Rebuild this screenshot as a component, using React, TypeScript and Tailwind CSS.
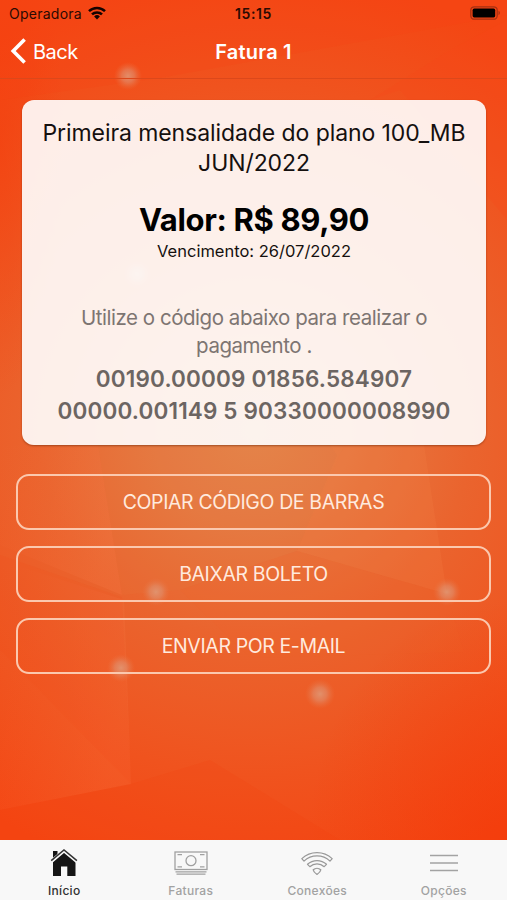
import { ReactNode } from "react";
import clsx from "clsx";

const sparks = [
  { x: 128, y: 76, r: 14 },
  { x: 137, y: 274, r: 14 },
  { x: 156, y: 592, r: 14 },
  { x: 447, y: 592, r: 14 },
  { x: 121, y: 668, r: 14 },
  { x: 320, y: 694, r: 15 },
];

function Backdrop() {
  return (
    <svg
      className="absolute inset-0 size-full"
      viewBox="0 0 507 900"
      preserveAspectRatio="none"
      aria-hidden="true"
    >
      <defs>
        <radialGradient
          id="glow"
          gradientUnits="userSpaceOnUse"
          cx="0"
          cy="0"
          r="1"
          gradientTransform="translate(255 430) scale(480 460)"
        >
          <stop offset="0" stopColor="#e5834a" />
          <stop offset="0.2" stopColor="#e67841" />
          <stop offset="0.45" stopColor="#ea642e" />
          <stop offset="0.75" stopColor="#f0531e" />
          <stop offset="1" stopColor="#f44613" />
        </radialGradient>
        <radialGradient id="spark">
          <stop offset="0" stopColor="#df9d7c" stopOpacity="0.8" />
          <stop offset="0.45" stopColor="#df9474" stopOpacity="0.55" />
          <stop offset="1" stopColor="#e87848" stopOpacity="0" />
        </radialGradient>
        <linearGradient id="facet" x1="0" y1="0" x2="1" y2="0.4">
          <stop offset="0" stopColor="#ff7040" stopOpacity="0" />
          <stop offset="1" stopColor="#ff8a58" stopOpacity="0.14" />
        </linearGradient>
        <radialGradient id="edge" cx="0" cy="0.35" r="0.64">
          <stop offset="0" stopColor="#f43f0e" stopOpacity="0.6" />
          <stop offset="1" stopColor="#f43f0e" stopOpacity="0" />
        </radialGradient>
        <radialGradient id="corner" cx="1" cy="1" r="1">
          <stop offset="0" stopColor="#f43808" stopOpacity="0.6" />
          <stop offset="1" stopColor="#f43808" stopOpacity="0" />
        </radialGradient>
      </defs>
      <rect width="507" height="900" fill="url(#glow)" />
      <rect width="100" height="400" fill="url(#edge)" />
      <path d="M0 0H507V15L160 78 0 100Z" fill="#f84315" opacity="0.2" />
      <path d="M507 20V220L400 90 370 100 450 50Z" fill="#f94717" opacity="0.2" />
      <path d="M98 445 122 595 0 545V445Z" fill="url(#facet)" />
      <path d="M124 600 131 784 0 810V560Z" fill="url(#facet)" />
      <path d="M0 555 122 597 131 784 0 650Z" fill="#f24414" opacity="0.1" />
      <path d="M337 460 297 551 180 590 122 595 98 445H345Z" fill="#e59452" opacity="0.06" />
      <path d="M337 455 297 551 447 594 424 445H330Z" fill="#f58048" opacity="0.2" />
      <path d="M297 551 447 594 464 652 250 658 180 590Z" fill="#f1662a" opacity="0.14" />
      <rect x="307" y="600" width="200" height="240" fill="url(#corner)" />
      <path d="M131 784 210 760 340 840H0V810Z" fill="#f63c0a" opacity="0.12" />
      {sparks.map((s) => (
        <circle key={`${s.x}-${s.y}`} cx={s.x} cy={s.y} r={s.r} fill="url(#spark)" />
      ))}
    </svg>
  );
}

function StatusBar() {
  return (
    <div className="grid h-[27px] grid-cols-3 items-center pl-[9px] pr-[6px] text-[#2b0a02]">
      <div className="flex items-center gap-[6px]">
        <span className="text-[14px] tracking-[0.25px]">Operadora</span>
        <svg className="-mt-[2px]" width="18" height="14" viewBox="0 0 18 14" fill="none" stroke="#140300" strokeWidth="2.5">
          <path d="M1 5.2a11.4 11.4 0 0 1 16 0" />
          <path d="M4 8.4a7.2 7.2 0 0 1 10 0" />
          <path d="M9 13.6 6.1 10.5a4.2 4.2 0 0 1 5.8 0z" fill="#140300" stroke="none" />
        </svg>
      </div>
      <span className="-ml-[3px] text-center text-[14px] font-semibold tracking-[0.6px]">15:15</span>
      <svg className="-mt-[1px] justify-self-end" width="31" height="14" viewBox="0 0 31 14">
        <rect x="0.8" y="0.8" width="26.4" height="12.4" rx="3.5" fill="none" stroke="#a53012" strokeWidth="1.3" />
        <rect x="2.6" y="2.6" width="22.6" height="8.8" rx="1.6" fill="#000" />
        <path d="M28.5 4.8a2.4 2.4 0 0 1 0 4.4z" fill="#a53012" />
      </svg>
    </div>
  );
}

function NavBar() {
  return (
    <header className="grid h-[52px] grid-cols-3 items-center border-b border-[#dc481b] px-[10px] pb-[2px] text-white">
      <button className="flex items-center gap-[7px] text-[20px] tracking-[-0.5px]">
        <svg className="-mt-[2px]" width="16" height="26" viewBox="0 0 16 26" fill="none" stroke="currentColor" strokeWidth="3.6">
          <path d="M14.6 1.5 3.2 13l11.4 11.5" />
        </svg>
        Back
      </button>
      <h1 className="text-center text-[20px] font-semibold tracking-[0.2px]">Fatura 1</h1>
    </header>
  );
}

function InvoiceCard() {
  return (
    <section className="ml-[22px] mr-[21px] mt-[21px] flex h-[345px] flex-col items-center rounded-[12px] bg-white/90 pt-[19px] text-center text-black shadow-[0_1px_2px_rgba(110,40,10,0.55)]">
      <h2 className="whitespace-nowrap text-[23px] leading-[29.5px] tracking-[-0.08px] text-[#15100f]">
        Primeira mensalidade do plano 100_MB
        <br />
        JUN/2022
      </h2>
      <p className="mt-[23px] whitespace-nowrap text-[31px] font-bold leading-[38px] tracking-[-0.35px]">
        Valor: R$ 89,90
      </p>
      <p className="mt-[1px] text-[16.5px] leading-[22px] text-[#15100f]">Vencimento: 26/07/2022</p>
      <p className="mt-[42px] whitespace-nowrap text-[20.5px] leading-[28px] tracking-[-0.46px] text-[#7d7572]">
        Utilize o código abaixo para realizar o
        <br />
        pagamento .
      </p>
      <p className="mt-[3px] whitespace-nowrap text-[22.5px] font-semibold leading-[32px] tracking-[0.15px] text-[#6c6562]">
        00190.00009 01856.584907
        <br />
        00000.001149 5 90330000008990
      </p>
    </section>
  );
}

function OutlineButton({ title }: { title: string }) {
  return (
    <button className="h-[56px] rounded-[13px] border-2 border-[#fbc8ae] pt-[2px] text-[19.5px] tracking-[-0.38px] text-[#ffeade]">
      {title}
    </button>
  );
}

function HomeIcon() {
  return (
    <svg width="28" height="28" viewBox="0 0 28 28">
      <path d="M3 2h4.5v5.5L3 11.5z" fill="#151515" />
      <path d="M3 12.5 14 3l11.5 9.5V27h-8.2v-9.5H11V27H3z" fill="#151515" />
      <path d="M1.3 12.4 14 1.7l12.9 10.7" fill="none" stroke="#f8f8f8" strokeWidth="3.4" />
      <path d="M1.2 11.7 14 1l12.9 10.7" fill="none" stroke="#333" strokeWidth="1.5" />
    </svg>
  );
}

function MoneyIcon() {
  return (
    <svg width="34" height="24" viewBox="0 0 34 24" fill="none" stroke="#a0a0a0" strokeWidth="1.3">
      <rect x="1" y="1" width="32" height="17.5" />
      <circle cx="17" cy="9.7" r="5" />
      <path d="M3.5 3.7H8M26 3.7h4.5M3.5 15.8H8M26 15.8h4.5" />
      <path d="M1.5 20.8h31M2.5 23.2h29" />
    </svg>
  );
}

function SignalIcon() {
  return (
    <svg width="32" height="24" viewBox="0 0 32 24" fill="none" stroke="#999" strokeWidth="1.2" strokeLinejoin="round">
      <path d="M.8 7.6a22.5 22.5 0 0 1 30.4 0l-2.2 2.5a19 19 0 0 0-26 0z" />
      <path d="M6.5 13.3a14 14 0 0 1 19 0l-2.3 2.4a10.6 10.6 0 0 0-14.4 0z" />
      <path d="M12.2 18.8a5.7 5.7 0 0 1 7.6 0q-.3 2.2-3.8 4.6-3.5-2.4-3.8-4.6z" />
    </svg>
  );
}

function MenuIcon() {
  return (
    <svg width="28" height="18" viewBox="0 0 28 18" stroke="#a3a3a3" strokeWidth="1.6">
      <path d="M0 1.5h28M0 9h28M0 16.5h28" />
    </svg>
  );
}

function Tab({ label, icon, active }: { label: string; icon: ReactNode; active?: boolean }) {
  return (
    <button
      className={clsx(
        "flex flex-col items-center text-[12px] font-medium leading-[14px] tracking-[0.3px]",
        active ? "text-[#303030]" : "text-[#a2a2a2]"
      )}
    >
      <span className="flex h-[44px] items-center justify-center pt-[2px]">{icon}</span>
      {label}
    </button>
  );
}

export default function App() {
  return (
    <div className="relative flex h-[900px] w-[507px] flex-col overflow-hidden font-[Inter,sans-serif]">
      <Backdrop />
      <div className="relative flex grow flex-col">
        <StatusBar />
        <NavBar />
        <InvoiceCard />
        <div className="mx-[16px] mt-[29px] flex flex-col gap-[16px]">
          <OutlineButton title="COPIAR CÓDIGO DE BARRAS" />
          <OutlineButton title="BAIXAR BOLETO" />
          <OutlineButton title="ENVIAR POR E-MAIL" />
        </div>
        <nav className="mt-auto grid h-[60px] grid-cols-4 bg-[#f8f8f8] pl-[1px]">
          <Tab label="Início" icon={<HomeIcon />} active />
          <Tab label="Faturas" icon={<MoneyIcon />} />
          <Tab label="Conexões" icon={<SignalIcon />} />
          <Tab label="Opções" icon={<MenuIcon />} />
        </nav>
      </div>
    </div>
  );
}
